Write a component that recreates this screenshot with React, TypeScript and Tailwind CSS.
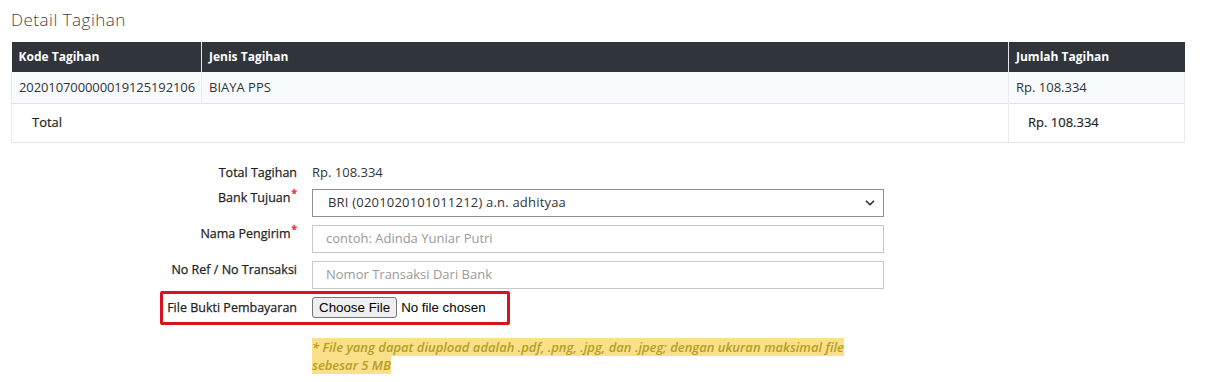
import { ChevronDown } from "lucide-react";

const rows = [
  { kode: "202010700000019125192106", jenis: "BIAYA PPS", jumlah: "Rp. 108.334" },
];

function Label({ text, required = false }: { text: string; required?: boolean }) {
  return (
    <div className="text-right text-[12.5px] leading-[18px] text-[#1f1f1f] [-webkit-text-stroke:0.25px_#1f1f1f]">
      {text}
      {required && (
        <sup className="text-[#dc3545] text-[10px] ml-[1px] [-webkit-text-stroke:0.5px_#dc3545]">*</sup>
      )}
    </div>
  );
}

export default function App() {
  return (
    <div className="min-h-[382px] bg-white px-[11px] pt-[9px] font-['Open_Sans',sans-serif] text-[#333]">
      <h2 className="text-[17px] leading-[22px] font-light text-[#444] tracking-[0.5px]">Detail Tagihan</h2>

      <table className="mt-[11px] w-[1174px] border-collapse text-[13px]">
        <thead>
          <tr className="bg-[#2f353b] text-white text-[12px] font-bold h-[30px]">
            <th className="w-[190px] text-left pl-[7px] border-r border-[#e5e7ea]">Kode Tagihan</th>
            <th className="text-left pl-[7px] border-r border-[#e5e7ea]">Jenis Tagihan</th>
            <th className="w-[176px] text-left pl-[7px]">Jumlah Tagihan</th>
          </tr>
        </thead>
        <tbody>
          {rows.map((r) => (
            <tr key={r.kode} className="h-[31px] bg-[#f8fbfd] border-b border-[#e3e3e3]">
              <td className="pl-[7px] border-l border-r border-[#e9ecef] tracking-[-0.1px]">{r.kode}</td>
              <td className="pl-[7px] border-r border-[#e9ecef]">{r.jenis}</td>
              <td className="pl-[7px] border-r border-[#e9ecef]">{r.jumlah}</td>
            </tr>
          ))}
          <tr className="h-[39px] border-b border-[#e3e3e3] text-[#1f1f1f] [-webkit-text-stroke:0.2px_#1f1f1f]">
            <td colSpan={2} className="pl-[20px] border-l border-r border-[#e9ecef]">Total</td>
            <td className="pl-[19px] border-r border-[#e9ecef]">Rp. 108.334</td>
          </tr>
        </tbody>
      </table>

      <div className="mt-[18px] grid grid-cols-[286px_572px] gap-x-[15px]">
        <div className="h-[24px] flex items-center justify-end">
          <Label text="Total Tagihan" />
        </div>
        <div className="h-[24px] flex items-center text-[13px]">Rp. 108.334</div>

        <div className="mt-[4px]">
          <Label text="Bank Tujuan" required />
        </div>
        <div className="mt-[4px] h-[28px] border border-[#8f8f8f] flex items-center justify-between pl-[15px] pr-[6px] text-[13px] text-[#333]">
          <span className="tracking-[0.2px]">BRI (0201020101011212) a.n. adhityaa</span>
          <ChevronDown size={14} strokeWidth={3} className="text-[#333]" />
        </div>

        <div className="mt-[8px]">
          <Label text="Nama Pengirim" required />
        </div>
        <div className="mt-[8px] h-[28px] border border-[#c8c8c8] flex items-center pl-[13px] text-[13px] text-[#9a9a9a]">
          contoh: Adinda Yuniar Putri
        </div>

        <div className="mt-[8px]">
          <Label text="No Ref / No Transaksi" />
        </div>
        <div className="mt-[8px] h-[28px] border border-[#c8c8c8] flex items-center pl-[13px] text-[13px] text-[#9a9a9a]">
          Nomor Transaksi Dari Bank
        </div>

        <div className="relative mt-[2px] h-[34px] flex items-center justify-end">
          <Label text="File Bukti Pembayaran" />
          <div className="absolute left-[149px] top-0 w-[350px] h-[34px] border-[3px] border-[#d7141e] rounded-[2px] pointer-events-none" />
        </div>
        <div className="mt-[2px] h-[34px] flex items-center font-['Liberation_Sans',Arial,sans-serif] text-[13.33px] text-black">
          <button className="h-[21px] px-[6px] border border-[#767676] bg-[#efefef] rounded-[3px] leading-none">
            Choose File
          </button>
          <span className="ml-[4px]">No file chosen</span>
        </div>

        <div />
        <div className="mt-[13px] w-[545px] text-[13px] leading-[18px] italic font-semibold">
          <span className="bg-[#fbe08a] text-[#b69d24]">
            * File yang dapat diupload adalah .pdf, .png, .jpg, dan .jpeg; dengan ukuran maksimal file sebesar 5 MB
          </span>
        </div>
      </div>
    </div>
  );
}
